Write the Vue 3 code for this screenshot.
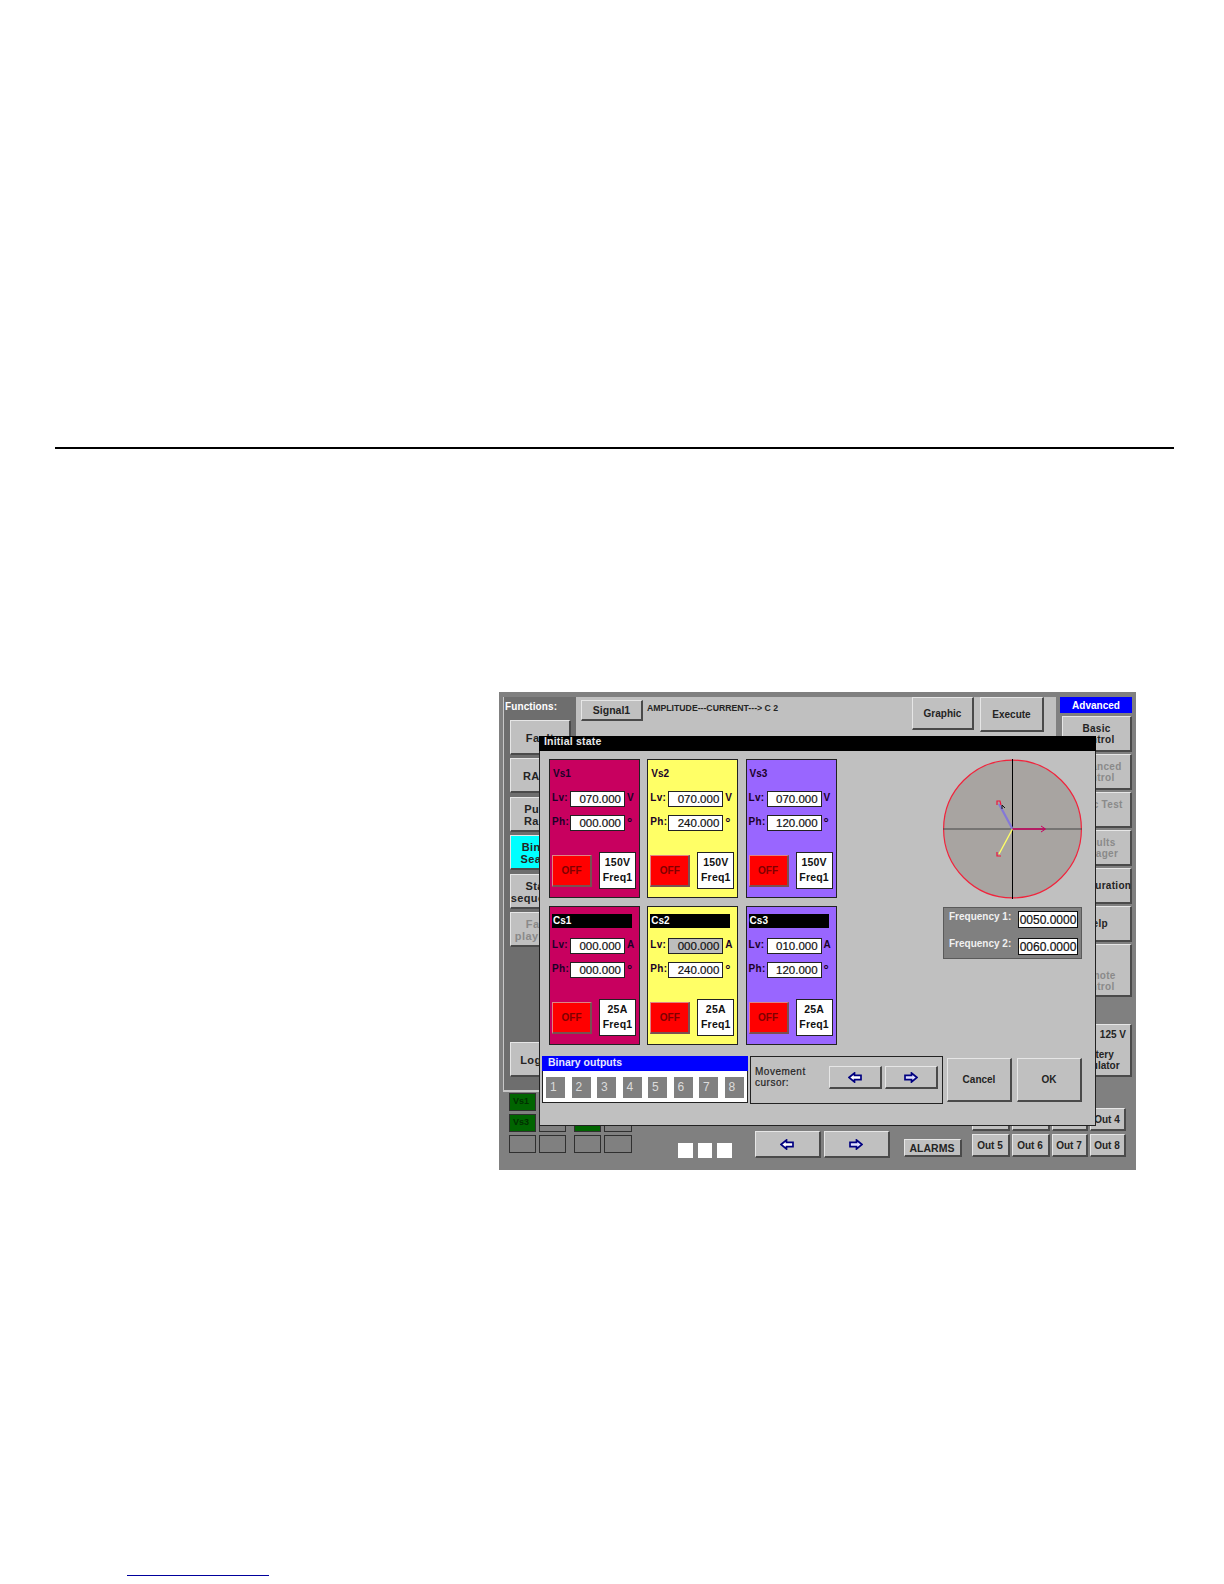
<script setup>
const leftNav = [
  { lines: ['Fault'] },
  { lines: ['RAMP'] },
  { lines: ['Pulse', 'Ramp'] },
  { lines: ['Binary', 'Search'], cls: 'cyan' },
  { lines: ['State', 'sequencer'] },
  { lines: ['Fault', 'playback'], cls: 'off-state' }
]
const rightNav = [
  { lines: ['Basic', 'control'], cls: 'strong' },
  { lines: ['Advanced', 'control'], cls: 'off-state' },
  { lines: ['Logic Test'], cls: 'off-state top' },
  { lines: ['Results', 'Manager'], cls: 'off-state' },
  { lines: ['Configuration'], cls: 'strong' },
  { lines: ['Help'], cls: 'strong' },
  { lines: ['Remote', 'control'], cls: 'off-state low' }
]
const channels = [
  { name: 'Vs1', color: 'magenta', lv: '070.000', ph: '000.000', unit: 'V', range: '150V' },
  { name: 'Vs2', color: 'yellow', lv: '070.000', ph: '240.000', unit: 'V', range: '150V' },
  { name: 'Vs3', color: 'purple', lv: '070.000', ph: '120.000', unit: 'V', range: '150V' },
  { name: 'Cs1', color: 'magenta', lv: '000.000', ph: '000.000', unit: 'A', range: '25A', current: true },
  { name: 'Cs2', color: 'yellow', lv: '000.000', ph: '240.000', unit: 'A', range: '25A', current: true, dim: true },
  { name: 'Cs3', color: 'purple', lv: '010.000', ph: '120.000', unit: 'A', range: '25A', current: true }
]
const statusCells = [
  { t: 'Vs1', on: true }, {}, {}, {},
  { t: 'Vs3', on: true }, {}, { on: true }, {},
  {}, {}, {}, {}
]
const outputs = ['1', '2', '3', '4', '5', '6', '7', '8']
const outs = ['Out 1', 'Out 2', 'Out 3', 'Out 4', 'Out 5', 'Out 6', 'Out 7', 'Out 8']
</script>

<template>
  <div class="page">
    <div class="rule"></div>

    <div class="screen">
      <div class="upper">
        <aside class="functions">
          <div class="functions-title">Functions:</div>
          <div class="left-nav">
            <div v-for="b in leftNav" :key="b.lines[0] + b.lines[1]" class="btn nav-btn" :class="b.cls">
              <span v-for="l in b.lines" :key="l">{{ l }}</span>
            </div>
          </div>
          <div class="btn nav-btn log-btn"><span>Logger</span></div>
        </aside>

        <div class="center">
          <div class="btn signal">Signal1</div>
          <div class="path-text">AMPLITUDE---CURRENT---&gt; C 2</div>
          <div class="btn graphic">Graphic</div>
          <div class="btn execute">Execute</div>
        </div>

        <aside class="right-col">
          <div class="advanced">Advanced</div>
          <div class="right-nav">
            <div v-for="b in rightNav" :key="b.lines[0]" class="btn nav-btn" :class="b.cls">
              <span v-for="l in b.lines" :key="l">{{ l }}</span>
            </div>
          </div>
          <div class="btn battery">
            <span class="volts">125 V</span>
            <span>Battery</span>
            <span>Simulator</span>
          </div>
        </aside>
      </div>

      <div class="lower">
        <div class="status-grid">
          <div v-for="(c, i) in statusCells" :key="i" class="status" :class="{ on: c.on }">{{ c.t }}</div>
        </div>
        <div class="leds"><i></i><i></i><i></i></div>
        <div class="page-arrows">
          <div class="btn arrow-btn">
            <svg width="14" height="11" viewBox="0 0 14 11"><path d="M1 5.5 6.5 1V3.3H13V7.7H6.5V10Z" fill="#fff" stroke="#000080" stroke-width="1.7"/></svg>
          </div>
          <div class="btn arrow-btn">
            <svg width="14" height="11" viewBox="0 0 14 11"><path d="M13 5.5 7.5 1V3.3H1V7.7H7.5V10Z" fill="#e0e0ff" stroke="#000080" stroke-width="1.7"/></svg>
          </div>
        </div>
        <div class="btn alarms">ALARMS</div>
        <div class="outs">
          <div v-for="o in outs" :key="o" class="btn out">{{ o }}</div>
        </div>
      </div>

      <section class="dialog">
        <header class="dialog-title">Initial state</header>
        <div class="dialog-top">
          <div class="channels">
            <div v-for="c in channels" :key="c.name" class="channel" :class="c.color">
              <div class="chan-title" :class="{ bar: c.current }">{{ c.name }}</div>
              <div class="field">
                <label>Lv:</label>
                <span class="value" :class="{ dim: c.dim }">{{ c.lv }}</span>
                <b>{{ c.unit }}</b>
              </div>
              <div class="field">
                <label>Ph:</label>
                <span class="value">{{ c.ph }}</span>
                <b class="deg">°</b>
              </div>
              <div class="chan-actions">
                <div class="off">OFF</div>
                <div class="range">
                  <span>{{ c.range }}</span>
                  <span>Freq1</span>
                </div>
              </div>
            </div>
          </div>

          <div class="side">
            <svg class="vector" width="139" height="140" viewBox="0 0 139 140">
              <circle cx="69.5" cy="70" r="68.9" fill="#a8a4a1" stroke="#f0243c" stroke-width="1.2"/>
              <line x1="69.5" y1="0" x2="69.5" y2="140" stroke="#000" stroke-width="1"/>
              <line x1="0" y1="70" x2="139" y2="70" stroke="#444" stroke-width="1"/>
              <line x1="69.5" y1="70" x2="56" y2="45" stroke="#8478d8" stroke-width="2.2"/>
              <line x1="69.5" y1="70" x2="56" y2="95" stroke="#ffff66" stroke-width="1.4"/>
              <line x1="69.5" y1="70" x2="102" y2="70" stroke="#c8005f" stroke-width="1.6"/>
              <path d="M98 67 102.5 70 98 73" fill="none" stroke="#c8005f" stroke-width="1"/>
              <path d="M54 46V42H57L58 46" fill="none" stroke="#f0143c" stroke-width="1.2"/>
              <path d="M59 50 59 46 62 49" fill="none" stroke="#111" stroke-width="1"/>
              <path d="M54 93V97H58" fill="none" stroke="#f0143c" stroke-width="1.2"/>
            </svg>
            <div class="freq">
              <div class="freq-row"><span>Frequency 1:</span><b>0050.0000</b></div>
              <div class="freq-row"><span>Frequency 2:</span><b>0060.0000</b></div>
            </div>
          </div>
        </div>

        <div class="dialog-bottom">
          <div class="binary">
            <div class="binary-title">Binary outputs</div>
            <div class="binary-row">
              <span v-for="o in outputs" :key="o">{{ o }}</span>
            </div>
          </div>
          <div class="movement">
            <div class="movement-label">Movement<br>cursor:</div>
            <div class="btn move-btn">
              <svg width="14" height="11" viewBox="0 0 14 11"><path d="M1 5.5 6.5 1V3.3H13V7.7H6.5V10Z" fill="#fff" stroke="#000080" stroke-width="1.7"/></svg>
            </div>
            <div class="btn move-btn">
              <svg width="14" height="11" viewBox="0 0 14 11"><path d="M13 5.5 7.5 1V3.3H1V7.7H7.5V10Z" fill="#e0e0ff" stroke="#000080" stroke-width="1.7"/></svg>
            </div>
          </div>
          <div class="btn action">Cancel</div>
          <div class="btn action">OK</div>
        </div>
      </section>
    </div>

    <div class="link-line"></div>
  </div>
</template>

<style scoped>
.page {
  width: 1224px;
  height: 1584px;
  overflow: hidden;
  background: #fff;
  font-family: "Liberation Sans", Arial, sans-serif;
  font-size: 10px;
  font-weight: 700;
  color: #242424;
}
.rule {
  height: 2px;
  margin: 447px 50px 0 55px;
  background: #000;
}
.screen {
  position: relative;
  width: 637px;
  height: 478px;
  margin: 243px 0 0 499px;
  background: #808080;
}
.link-line {
  width: 142px;
  height: 1px;
  margin: 405px 0 0 127px;
  background: #00009c;
}

/* bevelled button */
.btn {
  display: flex;
  align-items: center;
  justify-content: center;
  box-sizing: border-box;
  background: #c0c0c0;
  border-style: solid;
  border-width: 1px 2px 2px 1px;
  border-color: #e6e6e6 #4a4a4a #4a4a4a #e6e6e6;
}

.upper {
  display: flex;
  height: 400px;
  padding-top: 5px;
  box-sizing: border-box;
}
.functions {
  display: flex;
  flex-direction: column;
  box-sizing: border-box;
  width: 73px;
  margin-left: 4px;
  padding: 0 0 13px 6px;
  background: #6e6e6e;
  border-left: 1px solid #c8c8c8;
  border-bottom: 2px solid #c8c8c8;
}
.functions-title {
  height: 23px;
  line-height: 20px;
  margin-left: -5px;
  color: #fff;
  letter-spacing: 0.1px;
}
.left-nav {
  display: grid;
  grid-auto-rows: 35px;
  row-gap: 3.4px;
}
.nav-btn {
  flex-direction: column;
  width: 61px;
  padding-top: 2px;
  font-size: 11px;
  letter-spacing: 0.4px;
  line-height: 12px;
  text-align: center;
}
.nav-btn.cyan {
  background: #00ffff;
}
.nav-btn.off-state {
  color: #8a8a8a;
}
.log-btn {
  height: 35px;
  margin-top: auto;
}
.center {
  display: flex;
  align-items: flex-start;
  width: 480px;
  background: #c0c0c0;
}
.signal {
  width: 62px;
  height: 21px;
  margin: 3px 0 0 5px;
  font-size: 10.5px;
}
.path-text {
  flex: 1;
  margin: 6px 0 0 4px;
  font-size: 8.7px;
  line-height: 11px;
}
.graphic {
  width: 62px;
  height: 33px;
  padding-top: 1px;
}
.execute {
  width: 64px;
  height: 35px;
  margin: 0 12px 0 6px;
  padding-top: 1px;
}
.right-col {
  display: flex;
  flex-direction: column;
  width: 80px;
}
.advanced {
  width: 72px;
  height: 16px;
  margin-left: 4px;
  background: #0000ff;
  color: #fff;
  text-align: center;
  line-height: 17px;
}
.right-nav {
  display: grid;
  grid-template-rows: repeat(6, 36px) 53px;
  row-gap: 2px;
  margin: 3px 0 0 6px;
}
.right-nav .nav-btn {
  width: 70px;
  padding-top: 0;
  font-size: 10px;
  line-height: 11px;
  letter-spacing: 0.3px;
}
.right-nav .top {
  justify-content: flex-start;
  padding-top: 6px;
}
.right-nav .low {
  justify-content: flex-end;
  padding-bottom: 3px;
}
.battery {
  flex-direction: column;
  width: 70px;
  height: 53px;
  margin: 27px 0 0 6px;
  line-height: 11px;
}
.battery .volts {
  align-self: flex-end;
  margin: 0 4px 9px 0;
}

.lower {
  display: flex;
  align-items: flex-start;
  padding: 1px 0 0 10px;
}
.status-grid {
  display: grid;
  grid-template-columns: 27px 27px 2px 27px 28px;
  grid-auto-rows: 18px;
  column-gap: 3px;
  row-gap: 3px;
}
.status:nth-child(4n + 3) {
  grid-column: 4;
}
.status:nth-child(4n + 4) {
  grid-column: 5;
}
.status {
  box-sizing: border-box;
  border: 1px solid #303030;
  padding-left: 3px;
  font-size: 9px;
  line-height: 15px;
  color: #003000;
}
.status.on {
  background: #006400;
}
.leds {
  display: flex;
  gap: 5px;
  margin: 50px 0 0 46px;
}
.leds i {
  display: block;
  width: 14.5px;
  height: 15px;
  background: #fff;
}
.page-arrows {
  display: flex;
  gap: 3px;
  margin: 38px 0 0 23px;
}
.arrow-btn {
  width: 66px;
  height: 27px;
}
.alarms {
  width: 58px;
  height: 18px;
  margin: 46px 0 0 14px;
  font-size: 10.5px;
}
.outs {
  display: grid;
  grid-template-columns: 38px 38px 36px 36px;
  grid-auto-rows: 23px;
  column-gap: 2px;
  row-gap: 3px;
  margin: 15px 0 0 10px;
}

.dialog {
  position: absolute;
  left: 40px;
  top: 44px;
  width: 557px;
  height: 390px;
  box-sizing: border-box;
  background: #c0c0c0;
  border: 1px solid #222;
  border-top: 0;
}
.dialog-title {
  height: 15px;
  margin: 0 -1px;
  padding-left: 5px;
  background: #000;
  color: #e8e8e8;
  font-size: 10.5px;
  letter-spacing: 0.2px;
  line-height: 11px;
}
.dialog-top {
  display: flex;
  justify-content: space-between;
  padding: 8px 13px 0 9px;
}
.channels {
  display: grid;
  grid-template-columns: repeat(3, 91px);
  grid-auto-rows: 139px;
  column-gap: 7.3px;
  row-gap: 8px;
}
.channel {
  box-sizing: border-box;
  padding: 7px 3px 0 2px;
  border: 1px solid #222;
  color: #1a0028;
}
.channel.magenta { background: #c8005f; }
.channel.yellow { background: #ffff66; }
.channel.purple { background: #9966ff; }
.chan-title {
  width: 80px;
  height: 14px;
  padding-left: 1px;
  box-sizing: border-box;
  line-height: 14px;
}
.chan-title.bar {
  background: #000;
  color: #fff;
}
.field {
  display: flex;
  align-items: center;
  height: 16px;
  margin-top: 8px;
}
.chan-title + .field {
  margin-top: 10px;
}
.field label {
  width: 18px;
  margin-top: -3px;
  letter-spacing: 0.3px;
}
.field b {
  margin: -3px 0 0 2px;
}
.field .deg {
  font-size: 13px;
  margin-top: -2px;
}
.value {
  box-sizing: border-box;
  width: 55px;
  height: 16px;
  padding-right: 3px;
  background: #fff;
  border: 1px solid #222;
  color: #111;
  font-size: 11.5px;
  font-weight: 400;
  line-height: 15px;
  text-align: right;
  -webkit-text-stroke: 0.2px #111;
}
.value.dim {
  background: #bdbdbd;
}
.chan-actions {
  display: flex;
  align-items: center;
  justify-content: space-between;
  margin-top: 21px;
}
.off {
  box-sizing: border-box;
  width: 40px;
  height: 32px;
  background: #ff0000;
  border-style: solid;
  border-width: 1px 2px 2px 1px;
  border-color: #e08484 #7a5050 #7a5050 #e08484;
  color: #800000;
  text-align: center;
  line-height: 29px;
}
.range {
  display: flex;
  flex-direction: column;
  align-items: center;
  justify-content: center;
  gap: 3px;
  box-sizing: border-box;
  width: 37px;
  height: 37px;
  padding-bottom: 2px;
  background: #fff;
  border: 1px solid #222;
  color: #111;
  font-size: 10.5px;
  letter-spacing: 0.2px;
  line-height: 12px;
}
.side {
  display: flex;
  flex-direction: column;
  width: 139px;
}
.vector {
  display: block;
}
.freq {
  display: flex;
  flex-direction: column;
  gap: 10px;
  box-sizing: border-box;
  height: 52px;
  margin-top: 8px;
  padding: 3px 3px 0 5px;
  background: #808080;
  border: 1px solid #5a5a5a;
  color: #f0f0f0;
}
.freq-row {
  display: flex;
  justify-content: space-between;
  height: 17px;
  line-height: 11px;
}
.freq-row b {
  width: 60px;
  height: 17px;
  background: #fff;
  border: 1px solid #111;
  box-sizing: border-box;
  color: #111;
  font-size: 12px;
  font-weight: 400;
  line-height: 16px;
  text-align: center;
  -webkit-text-stroke: 0.2px #111;
}
.dialog-bottom {
  display: flex;
  align-items: flex-start;
  margin: 11px 0 0 2px;
}
.binary {
  box-sizing: border-box;
  width: 206px;
  height: 47px;
  background: #fff;
  border: 1px solid #222;
  border-top: 0;
}
.binary-title {
  height: 15px;
  margin: 0 -1px;
  padding-left: 6px;
  background: #0000ff;
  color: #e8e8ff;
  font-size: 10.5px;
  line-height: 12px;
}
.binary-row {
  display: flex;
  gap: 6.5px;
  padding: 6px 0 0 3px;
}
.binary-row span {
  box-sizing: border-box;
  width: 19px;
  height: 21px;
  padding-left: 4px;
  background: #808080;
  color: #dcdcdc;
  font-size: 12px;
  font-weight: 400;
  line-height: 21px;
}
.movement {
  display: flex;
  align-items: flex-start;
  gap: 3px;
  box-sizing: border-box;
  width: 193px;
  height: 48px;
  margin-left: 2px;
  padding: 9px 0 0 4px;
  border: 1px solid #222;
}
.movement-label {
  width: 71px;
  font-size: 10px;
  font-weight: 400;
  line-height: 11px;
  letter-spacing: 0.5px;
  -webkit-text-stroke: 0.2px #222;
}
.move-btn {
  width: 53px;
  height: 23px;
}
.action {
  width: 65px;
  height: 44px;
  margin-top: 2px;
  margin-left: 4px;
}
.action + .action {
  margin-left: 5px;
}
</style>
